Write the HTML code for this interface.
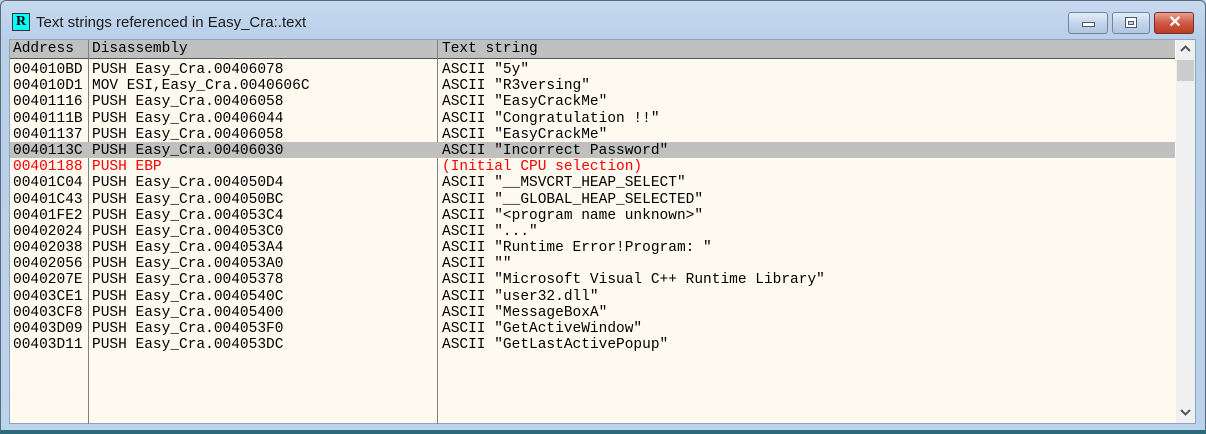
<!DOCTYPE html>
<html><head><style>
*{margin:0;padding:0;box-sizing:border-box}
body{width:1206px;height:434px;overflow:hidden;background:#bcd2ea;position:relative;font-family:"Liberation Mono",monospace}
.win{position:absolute;left:0;top:0;width:1206px;height:434px;border:1px solid #5a6b7e;border-radius:6px 6px 0 0;background:linear-gradient(#c6daf0,#b8cfe8 40px,#bcd3ec);}
.bot{position:absolute;left:0;top:430px;width:1206px;height:4px;background:#2a6a7a}
.title{position:absolute;left:36px;top:14px;font:15px "Liberation Sans",sans-serif;color:#1a1a1a}
.ico{position:absolute;left:12px;top:13px;width:18px;height:18px;background:#00ffff;border:1px solid #333;font:bold 14px "Liberation Serif",serif;text-align:center;line-height:16px;color:#000}
.btn{position:absolute;top:12px;height:22px;border:1px solid #6f86a3;border-radius:3px;background:linear-gradient(#e4edf7,#c3d5ea 50%,#b0c6e0)}
.cls{background:linear-gradient(#e8a092,#cf5a44 50%,#bb3b24);border-color:#7a3026}
.client{position:absolute;left:9px;top:39px;width:1187px;height:385px;background:#fffaf0;border:1px solid #8ea3bc}
.hdr{position:absolute;left:0;top:0;width:1165px;height:19px;background:#c0c0c0;border-bottom:1px solid #555}
.hdr span{position:absolute;top:1px;font-size:14.5px;color:#000}
.vl{position:absolute;top:0;width:1px;height:384px;background:#808080}
.rows{position:absolute;left:0;top:21px;width:1165px}
.r{height:16.2px;line-height:16.2px;font-size:14.5px;white-space:pre;position:relative;color:#000}
.r span{position:absolute;top:1px}
.sel{background:#c0c0c0}
.red{color:#ff0000}
.sb{position:absolute;left:1166px;top:0;width:19px;height:383px;background:#f0f0f0}
.thumb{position:absolute;left:1px;top:20px;width:17px;height:21px;background:#cdcdcd}
</style></head><body>
<div class="win"></div>
<div class="bot"></div>
<div class="ico">R</div>
<div class="title">Text strings referenced in Easy_Cra:.text</div>
<div class="btn" style="left:1068px;width:40px"><div style="position:absolute;left:13px;top:9px;width:13px;height:5px;background:#fff;border:1px solid #4a5a6e"></div></div>
<div class="btn" style="left:1112px;width:38px"><div style="position:absolute;left:12px;top:4px;width:12px;height:11px;border:1px solid #4a5a6e;background:#fff"><div style="position:absolute;left:2px;top:3px;width:6px;height:4px;border:1px solid #4a5a6e;background:#c3d5ea"></div></div></div>
<div class="btn cls" style="left:1154px;width:40px"><div style="position:absolute;left:0;width:40px;top:0;text-align:center;font:bold 16px 'Liberation Sans',sans-serif;color:#fff;line-height:20px">✕</div></div>
<div class="client">
<div class="hdr"><span style="left:3px">Address</span><span style="left:82px">Disassembly</span><span style="left:432px">Text string</span></div>
<div class="vl" style="left:78px"></div>
<div class="vl" style="left:427px"></div>
<div class="rows">
<div class="r"><span style="left:3px">004010BD</span><span style="left:82px">PUSH Easy_Cra.00406078</span><span style="left:432px">ASCII "5y"</span></div>
<div class="r"><span style="left:3px">004010D1</span><span style="left:82px">MOV ESI,Easy_Cra.0040606C</span><span style="left:432px">ASCII "R3versing"</span></div>
<div class="r"><span style="left:3px">00401116</span><span style="left:82px">PUSH Easy_Cra.00406058</span><span style="left:432px">ASCII "EasyCrackMe"</span></div>
<div class="r"><span style="left:3px">0040111B</span><span style="left:82px">PUSH Easy_Cra.00406044</span><span style="left:432px">ASCII "Congratulation !!"</span></div>
<div class="r"><span style="left:3px">00401137</span><span style="left:82px">PUSH Easy_Cra.00406058</span><span style="left:432px">ASCII "EasyCrackMe"</span></div>
<div class="r sel"><span style="left:3px">0040113C</span><span style="left:82px">PUSH Easy_Cra.00406030</span><span style="left:432px">ASCII "Incorrect Password"</span></div>
<div class="r red"><span style="left:3px">00401188</span><span style="left:82px">PUSH EBP</span><span style="left:432px">(Initial CPU selection)</span></div>
<div class="r"><span style="left:3px">00401C04</span><span style="left:82px">PUSH Easy_Cra.004050D4</span><span style="left:432px">ASCII "__MSVCRT_HEAP_SELECT"</span></div>
<div class="r"><span style="left:3px">00401C43</span><span style="left:82px">PUSH Easy_Cra.004050BC</span><span style="left:432px">ASCII "__GLOBAL_HEAP_SELECTED"</span></div>
<div class="r"><span style="left:3px">00401FE2</span><span style="left:82px">PUSH Easy_Cra.004053C4</span><span style="left:432px">ASCII "&lt;program name unknown&gt;"</span></div>
<div class="r"><span style="left:3px">00402024</span><span style="left:82px">PUSH Easy_Cra.004053C0</span><span style="left:432px">ASCII "..."</span></div>
<div class="r"><span style="left:3px">00402038</span><span style="left:82px">PUSH Easy_Cra.004053A4</span><span style="left:432px">ASCII "Runtime Error!Program: "</span></div>
<div class="r"><span style="left:3px">00402056</span><span style="left:82px">PUSH Easy_Cra.004053A0</span><span style="left:432px">ASCII ""</span></div>
<div class="r"><span style="left:3px">0040207E</span><span style="left:82px">PUSH Easy_Cra.00405378</span><span style="left:432px">ASCII "Microsoft Visual C++ Runtime Library"</span></div>
<div class="r"><span style="left:3px">00403CE1</span><span style="left:82px">PUSH Easy_Cra.0040540C</span><span style="left:432px">ASCII "user32.dll"</span></div>
<div class="r"><span style="left:3px">00403CF8</span><span style="left:82px">PUSH Easy_Cra.00405400</span><span style="left:432px">ASCII "MessageBoxA"</span></div>
<div class="r"><span style="left:3px">00403D09</span><span style="left:82px">PUSH Easy_Cra.004053F0</span><span style="left:432px">ASCII "GetActiveWindow"</span></div>
<div class="r"><span style="left:3px">00403D11</span><span style="left:82px">PUSH Easy_Cra.004053DC</span><span style="left:432px">ASCII "GetLastActivePopup"</span></div>
</div>
<div class="sb"><div class="thumb"></div>
<svg style="position:absolute;left:4px;top:5px" width="11" height="8"><path d="M1 6 L5.5 1.5 L10 6" stroke="#555" stroke-width="2" fill="none"/></svg>
<svg style="position:absolute;left:4px;top:368px" width="11" height="8"><path d="M1 2 L5.5 6.5 L10 2" stroke="#555" stroke-width="2" fill="none"/></svg>
</div>
</div>
</body></html>
